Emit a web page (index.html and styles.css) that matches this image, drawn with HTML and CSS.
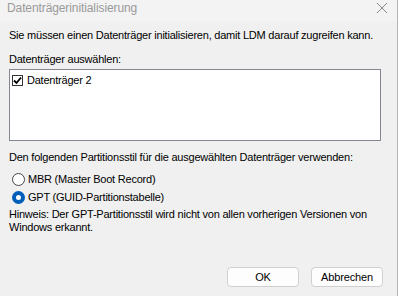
FILE: index.html
```html
<!DOCTYPE html>
<html lang="de">
<head>
    <meta charset="UTF-8">
    <title>Datenträgerinitialisierung</title>
    <link rel="stylesheet" href="styles.css">
</head>
<body>
    <div class="window">
        <div class="titlebar">
            <span class="title">Datenträgerinitialisierung</span>
            <svg class="close" width="12" height="12" viewBox="0 0 12 12">
                <path d="M1 1 L11 11 M11 1 L1 11" stroke="#8a8a8a" stroke-width="1" fill="none"/>
            </svg>
        </div>

        <div class="content">
            <p class="intro">Sie müssen einen Datenträger initialisieren, damit LDM darauf zugreifen kann.</p>
            <p class="label">Datenträger auswählen:</p>

            <div class="listbox">
                <label class="list-item">
                    <span class="checkbox">
                        <svg width="9" height="9" viewBox="0 0 9 9">
                            <path d="M1 4.5 L3.5 7 L8 1.5" stroke="#000" stroke-width="1.8" fill="none"/>
                        </svg>
                    </span>
                    Datenträger 2
                </label>
            </div>

            <p class="label style-label">Den folgenden Partitionsstil für die ausgewählten Datenträger verwenden:</p>

            <div class="radios">
                <label class="radio-row"><span class="radio"></span>MBR (Master Boot Record)</label>
                <label class="radio-row"><span class="radio checked"></span>GPT (GUID-Partitionstabelle)</label>
            </div>

            <p class="hint">Hinweis: Der GPT-Partitionsstil wird nicht von allen vorherigen Versionen von Windows erkannt.</p>
        </div>

        <div class="buttons">
            <button class="btn">OK</button>
            <button class="btn">Abbrechen</button>
        </div>
    </div>
</body>
</html>
```
FILE: styles.css
```css
* {
    margin: 0;
    padding: 0;
    box-sizing: border-box;
}

body {
    background: #ffffff;
    font-family: 'Liberation Sans', Arial, sans-serif;
    font-size: 11px;
    letter-spacing: -0.22px;
    color: #000;
}

.window {
    width: 398px;
    height: 296px;
    background: #f0f0f0;
    border-right: 1px solid #b4b4b4;
    display: flex;
    flex-direction: column;
}

.titlebar {
    height: 22px;
    background: #f3f3f3;
    display: flex;
    align-items: flex-start;
    justify-content: space-between;
    padding: 1px 9px 0 7px;
}

.title {
    color: #9a9a9a;
    font-size: 12px;
    letter-spacing: -0.1px;
    line-height: 14px;
}

.close {
    margin-top: 1px;
}

.content {
    padding: 7px 9px 0 9px;
    flex: 1;
}

.intro {
    line-height: 13px;
}

.label {
    margin-top: 11px;
    line-height: 13px;
}

.listbox {
    margin-top: 3px;
    width: 372px;
    height: 72px;
    background: #fff;
    border: 1px solid #828790;
    padding: 4px 2px;
}

.list-item {
    display: flex;
    align-items: center;
    gap: 4px;
    line-height: 13px;
}

.checkbox {
    width: 11px;
    height: 11px;
    border: 1px solid #333;
    background: #fff;
    display: flex;
    align-items: center;
    justify-content: center;
}

.style-label {
    margin-top: 10px;
}

.radios {
    margin-top: 8px;
    display: flex;
    flex-direction: column;
    gap: 4px;
}

.radio-row {
    display: flex;
    align-items: center;
    gap: 3px;
    height: 14px;
    padding-left: 3px;
}

.radio {
    width: 13px;
    height: 13px;
    border-radius: 50%;
    border: 1px solid #444;
    background: #fff;
}

.radio.checked {
    border: 4px solid #005fb8;
}

.hint {
    margin-top: 4px;
    line-height: 13px;
    width: 372px;
}

.buttons {
    display: flex;
    justify-content: flex-end;
    gap: 12px;
    padding: 0 14px 9px 0;
}

.btn {
    width: 72px;
    height: 20px;
    background: #fdfdfd;
    border: 1px solid #d0d0d0;
    border-radius: 4px;
    font-family: 'Liberation Sans', Arial, sans-serif;
    font-size: 11px;
    letter-spacing: -0.15px;
    color: #000;
}
```
